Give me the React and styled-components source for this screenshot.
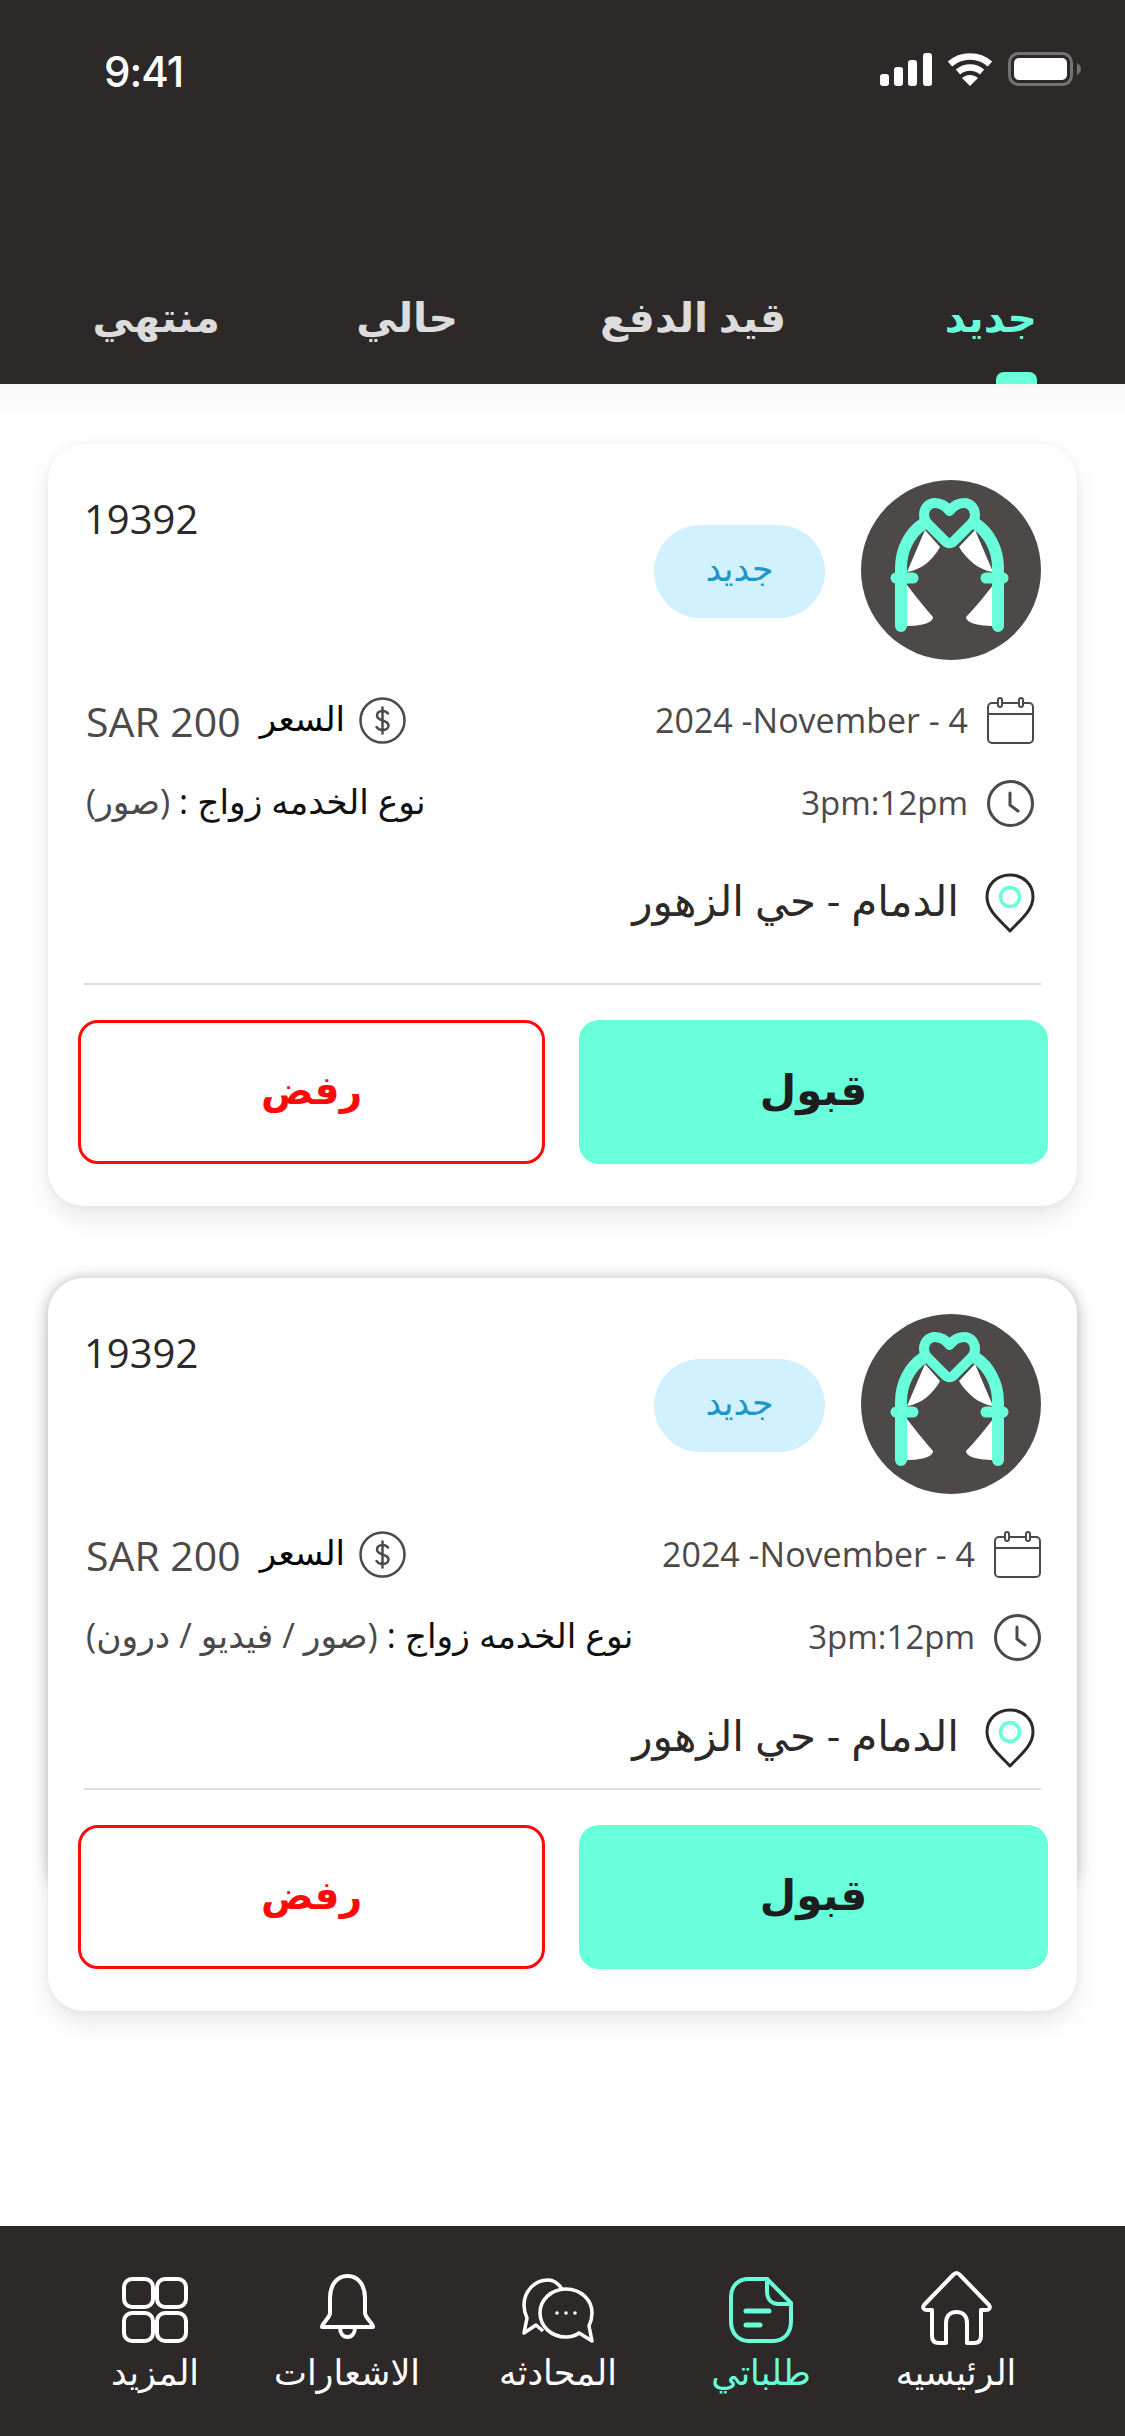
import React from "react";
import styled, { createGlobalStyle } from "styled-components";

const Global = createGlobalStyle`
  html, body { margin: 0; padding: 0; background: #fff; }
  * { box-sizing: border-box; }
  body { font-family: "Open Sans", "DejaVu Sans", sans-serif; }
`;
const Page = styled.div`
  width: 1125px; height: 2436px; display: flex; flex-direction: column; overflow: hidden; background: #fff;
`;
const Header = styled.header`
  height: 384px; background: #2d2929; display: flex; flex-direction: column; flex: none;
`;
const StatusBar = styled.div`
  display: flex; justify-content: space-between; align-items: center; padding: 52px 44px 0 104px; height: 86px;
`;
const Clock = styled.span`
  font-family: Inter, sans-serif; font-size: 42px; font-weight: 500; color: #fff; letter-spacing: -1px; margin-top: 4px;
`;
const StatusIcons = styled.div` display: flex; align-items: center; gap: 15px; `;
const Tabs = styled.nav`
  margin-top: auto; display: grid; grid-template-columns: 251px 328px 238px 133px; justify-content: start; direction: rtl;
  padding-right: 88px; height: 98px; align-items: start;
`;
const Tab = styled.div`
  position: relative; font-size: 41px; font-weight: 700; line-height: 60px; height: 98px; white-space: nowrap;
  color: ${p => (p.$active ? "#68ffdb" : "#dcdcdc")};
`;
const Indicator = styled.span`
  position: absolute; right: 0; bottom: 0; width: 41px; height: 12px; background: #68ffdb; border-radius: 8px 8px 0 0;
`;
const Content = styled.main`
  flex: 1; background: linear-gradient(#f8f8f8, #fff 36px); padding: 60px 48px 0; display: flex; flex-direction: column; gap: 72px;
`;
const CardFrame = styled.div`
  position: relative; isolation: isolate;
  ${p => p.$deep && `
    &::before { content: ""; position: absolute; z-index: -1; inset: 0 0 auto 0; height: 620px; border-radius: 36px;
      box-shadow: 0 0 16px rgba(0,0,0,.22); }
  `}
`;
const Card = styled.article`
  background: #fff; border-radius: 36px; padding: 36px 36px 42px; direction: rtl;
  box-shadow: 0 12px 24px rgba(0,0,0,.09), 0 0 8px rgba(0,0,0,.05);
`;
const Top = styled.div` display: flex; height: 180px; `;
const Avatar = styled.svg` width: 180px; height: 180px; flex: none; `;
const Badge = styled.span`
  margin: 45px 36px 0 0; width: 171px; height: 93px; border-radius: 47px; background: #d1f1fe; color: #1f95c8;
  display: flex; align-items: center; justify-content: center; font-size: 35px; padding-bottom: 9px;
`;
const OrderNo = styled.span`
  margin-right: auto; margin-top: 13px; font-size: 40px; line-height: 52px; color: #2d2929; direction: ltr;
`;
const Row = styled.div`
  display: flex; justify-content: space-between; align-items: center; height: 47px; margin-top: ${p => p.$top}px;
  padding-right: ${p => p.$inset || 0}px; padding-left: 2px;
`;
const Group = styled.div` display: flex; align-items: center; gap: ${p => p.$gap || 19}px; `;
const Icon = styled.svg` width: 47px; height: 47px; flex: none; display: block; `;
const Muted = styled.span` font-size: ${p => p.$size || 34}px; color: #4d4949; white-space: nowrap; direction: ltr; margin-top: -2px; `;
const Price = styled.span` font-size: 41px; color: #4d4949; white-space: nowrap; direction: ltr; margin-right: 5px; `;
const Label = styled.span` font-size: 34px; color: #000; white-space: nowrap; margin-top: -6px; `;
const Service = styled.span` font-size: 34.5px; color: #111; white-space: nowrap; margin-top: -6px; `;
const ServiceKind = styled.span` color: #4d4949; `;
const LocationRow = styled.div`
  display: flex; align-items: center; gap: 26px; height: 60px; margin-top: ${p => p.$top}px; padding-right: 6px;
`;
const Pin = styled.svg` width: 50px; height: 60px; flex: none; `;
const LocationText = styled.span` font-size: 42px; color: #2d2929; white-space: nowrap; margin-top: -8px; `;
const Divider = styled.hr`
  border: 0; height: 2px; background: #dddddd; margin: ${p => p.$top}px 0 35px;
`;
const Actions = styled.div` display: flex; justify-content: space-between; margin: 0 -7px 0 -6px; `;
const Accept = styled.button`
  width: 469px; height: 144px; border: 0; border-radius: 20px; background: #68ffdb; color: #1d1d1d; padding: 0 0 8px;
  font: 700 42px "Open Sans", "DejaVu Sans", sans-serif;
`;
const Reject = styled.button`
  width: 467px; height: 144px; border: 3px solid #ff0a0a; border-radius: 20px; background: #fff; color: #ff0a0a; padding: 0 0 8px;
  font: 700 39px "Open Sans", "DejaVu Sans", sans-serif;
`;
const BottomNav = styled.footer`
  height: 210px; flex: none; background: #2d2929; display: grid; grid-template-columns: 170px 214px 208px 198px 192px; padding-left: 70px;
`;
const NavItem = styled.div`
  display: flex; flex-direction: column; align-items: center; padding-top: 45px; height: 210px; direction: rtl;
  color: ${p => (p.$active ? "#68ffdb" : "#fff")};
`;
const NavIcon = styled.svg` width: ${p => p.$w}px; height: 74px; display: block; flex: none; `;
const NavLabel = styled.span` font-size: 35px; line-height: 48px; margin-top: 3px; white-space: nowrap; `;

const Arch = () => (
  <Avatar viewBox="0 0 180 180">
    <circle cx="90" cy="90" r="90" fill="#4d4949" />
    <path fill="#fff" d="M64 50 L79 67 C72 80 60 90 46 92 Z M114 50 L98 67 C106 80 118 90 132 92 Z M46 105 C56 118 64 128 72 137 C72 143 60 146 46 146 Z M132 105 C122 118 114 128 105 137 C105 143 118 146 132 146 Z" />
    <g fill="none" stroke="#68ffdb" strokeLinecap="round">
      <path strokeWidth="12" d="M40 146 V88 C40 68 50 52 62 44 M137 146 V88 C137 68 127 52 115 44" />
      <path strokeWidth="11" d="M35 98 H52 M125 98 H142" />
      <path strokeWidth="10" strokeLinejoin="round" d="M88.5 31 C84 25 79 23 74 23 C67 23 63 29 63 35 C63 39 65 42 67 44 L84 61 C87 64 90 64 93 61 L110 44 C112 42 114 39 114 35 C114 29 110 23 103 23 C98 23 93 25 88.5 31 Z" />
    </g>
  </Avatar>
);
const Calendar = () => (
  <Icon viewBox="0 0 47 47" fill="none" stroke="#4d4949" strokeWidth="2">
    <rect x="1" y="6" width="45" height="40" rx="4" />
    <path d="M1 17 H46" strokeWidth="2" />
    <rect x="11" y="1" width="4" height="9" rx="2" fill="#fff" />
    <rect x="32" y="1" width="4" height="9" rx="2" fill="#fff" />
  </Icon>
);
const ClockIcon = () => (
  <Icon viewBox="0 0 47 47" fill="none" stroke="#4d4949" strokeWidth="3" strokeLinecap="round">
    <circle cx="23.5" cy="23.5" r="22" />
    <path d="M23 13 V25 L31 31" />
  </Icon>
);
const Dollar = () => (
  <Icon viewBox="0 0 47 47" fill="none" stroke="#4d4949" strokeWidth="2.5" strokeLinecap="round">
    <circle cx="23.5" cy="23.5" r="22" />
    <path d="M29 16.5 C27.5 14.5 25.5 14 23.5 14 C20 14 18 16 18 18.5 C18 21.5 20.5 22.5 23.5 23.5 C27 24.5 29.5 25.5 29.5 28.5 C29.5 31 27 33 23.5 33 C21 33 19 32 17.5 30 M23.5 10.5 V36.5" />
  </Icon>
);
const PinIcon = () => (
  <Pin viewBox="0 0 50 60" fill="none">
    <path stroke="#2d2929" strokeWidth="3" strokeLinejoin="round" d="M25 2 C12 2 2 11 2 24 C2 38 16 48 25 58 C34 48 48 38 48 24 C48 11 38 2 25 2 Z" />
    <circle cx="25" cy="24" r="9.5" stroke="#68ffdb" strokeWidth="3.5" />
  </Pin>
);

const OrderCard = ({ deep, service, dateInset, locTop, dividerTop }) => (
  <CardFrame $deep={deep}>
    <Card>
      <Top>
        <Arch />
        <Badge>جديد</Badge>
        <OrderNo>19392</OrderNo>
      </Top>
      <Row $top={37} $inset={dateInset}>
        <Group><Calendar /><Muted>2024 -November - 4</Muted></Group>
        <Group $gap={14}><Dollar /><Label>السعر</Label><Price>SAR 200</Price></Group>
      </Row>
      <Row $top={36} $inset={dateInset}>
        <Group><ClockIcon /><Muted $size={33}>3pm:12pm</Muted></Group>
        <Service>نوع الخدمه زواج : <ServiceKind>({service})</ServiceKind></Service>
      </Row>
      <LocationRow $top={locTop}>
        <PinIcon />
        <LocationText>الدمام - حي الزهور</LocationText>
      </LocationRow>
      <Divider $top={dividerTop} />
      <Actions>
        <Accept>قبول</Accept>
        <Reject>رفض</Reject>
      </Actions>
    </Card>
  </CardFrame>
);

const Signal = () => (
  <svg width="52" height="33" viewBox="0 0 52 33" fill="#fff">
    <rect x="0" y="21" width="9" height="12" rx="3" />
    <rect x="14" y="14" width="9" height="19" rx="3" />
    <rect x="28" y="7" width="9" height="26" rx="3" />
    <rect x="43" y="0" width="9" height="33" rx="3" />
  </svg>
);
const Wifi = () => (
  <svg width="46" height="33" viewBox="0 0 46 33" fill="none" stroke="#fff" strokeWidth="6.5">
    <path d="M3 11 C14 1 32 1 43 11" />
    <path d="M11 19 C18 13 28 13 35 19" />
    <path d="M23 33 L15 25 C20 21 26 21 31 25 Z" fill="#fff" stroke="none" />
  </svg>
);
const Battery = () => (
  <svg width="73" height="34" viewBox="0 0 73 34" fill="none">
    <rect x="1.5" y="1.5" width="62" height="31" rx="9" stroke="#757272" strokeWidth="3" />
    <rect x="6" y="6" width="53" height="22" rx="5" fill="#fff" />
    <path d="M69 11 C72 13 73 15 73 17 C73 19 72 21 69 23 Z" fill="#757272" />
  </svg>
);
const Home = () => (
  <NavIcon $w={71} viewBox="0 0 71 74" fill="none" stroke="currentColor" strokeWidth="4" strokeLinejoin="round">
    <path d="M35.5 2 C37 2 38 3 39 4 L68 34 C70 37 68 39 65 39 H60 V65 C60 70 57 72 53 72 H46 V52 C46 44 41 41 35.5 41 C30 41 25 44 25 52 V72 H18 C14 72 11 70 11 65 V39 H6 C3 39 1 37 3 34 L32 4 C33 3 34 2 35.5 2 Z" />
  </NavIcon>
);
const Orders = () => (
  <NavIcon $w={64} viewBox="0 0 64 74" fill="none" stroke="currentColor" strokeWidth="4" strokeLinecap="round" strokeLinejoin="round">
    <path d="M20 8 H38 L62 32 V50 C62 62 55 70 44 70 H20 C9 70 2 62 2 50 V26 C2 15 9 8 20 8 Z" />
    <path d="M38 8 V20 C38 28 42 33 50 33 H62" />
    <path d="M17 40 H40 M17 54 H31" strokeWidth="5" />
  </NavIcon>
);
const Chat = () => (
  <NavIcon $w={72} viewBox="0 0 72 74" fill="none" stroke="currentColor" strokeWidth="3.5" strokeLinejoin="round">
    <path d="M44 18 C59 18 70 29 70 42 C70 47 69 51 67 55 L70 70 L57 62 C53 65 49 66 44 66 C29 66 18 55 18 42 C18 29 29 18 44 18 Z" />
    <path d="M40 18 C36 12 32 9 26 9 C12 9 2 21 2 34 C2 39 3 43 5 47 L2 62 L14 54 L21 60" />
    <circle cx="35" cy="42" r="1.8" fill="currentColor" stroke="none" />
    <circle cx="44" cy="42" r="1.8" fill="currentColor" stroke="none" />
    <circle cx="53" cy="42" r="1.8" fill="currentColor" stroke="none" />
  </NavIcon>
);
const Bell = () => (
  <NavIcon $w={55} viewBox="0 0 55 74" fill="none" stroke="currentColor" strokeWidth="4" strokeLinejoin="round">
    <path d="M27.5 5 C16 5 10 15 10 27 V42 C10 47 2 52 2 56 H53 C53 52 45 47 45 42 V27 C45 15 39 5 27.5 5 Z" />
    <path d="M20 56 C20 62 23 66 27.5 66 C32 66 35 62 35 56" />
  </NavIcon>
);
const GridIcon = () => (
  <NavIcon $w={66} viewBox="0 0 66 74" fill="none" stroke="currentColor" strokeWidth="4">
    <rect x="2" y="8" width="29" height="28" rx="8" />
    <rect x="35" y="8" width="29" height="28" rx="8" />
    <rect x="2" y="42" width="29" height="28" rx="8" />
    <rect x="35" y="42" width="29" height="28" rx="8" />
  </NavIcon>
);

export default function App() {
  return (
    <Page>
      <Global />
      <Header>
        <StatusBar>
          <Clock>9:41</Clock>
          <StatusIcons><Signal /><Wifi /><Battery /></StatusIcons>
        </StatusBar>
        <Tabs>
          <Tab $active>جديد<Indicator /></Tab>
          <Tab>قيد الدفع</Tab>
          <Tab>حالي</Tab>
          <Tab>منتهي</Tab>
        </Tabs>
      </Header>
      <Content>
        <OrderCard service="صور" dateInset={7} locTop={46} dividerTop={50} />
        <OrderCard deep service="صور / فيديو / درون" dateInset={0} locTop={47} dividerTop={20} />
      </Content>
      <BottomNav>
        <NavItem><GridIcon /><NavLabel>المزيد</NavLabel></NavItem>
        <NavItem><Bell /><NavLabel>الاشعارات</NavLabel></NavItem>
        <NavItem><Chat /><NavLabel>المحادثه</NavLabel></NavItem>
        <NavItem $active><Orders /><NavLabel>طلباتي</NavLabel></NavItem>
        <NavItem><Home /><NavLabel>الرئيسيه</NavLabel></NavItem>
      </BottomNav>
    </Page>
  );
}
